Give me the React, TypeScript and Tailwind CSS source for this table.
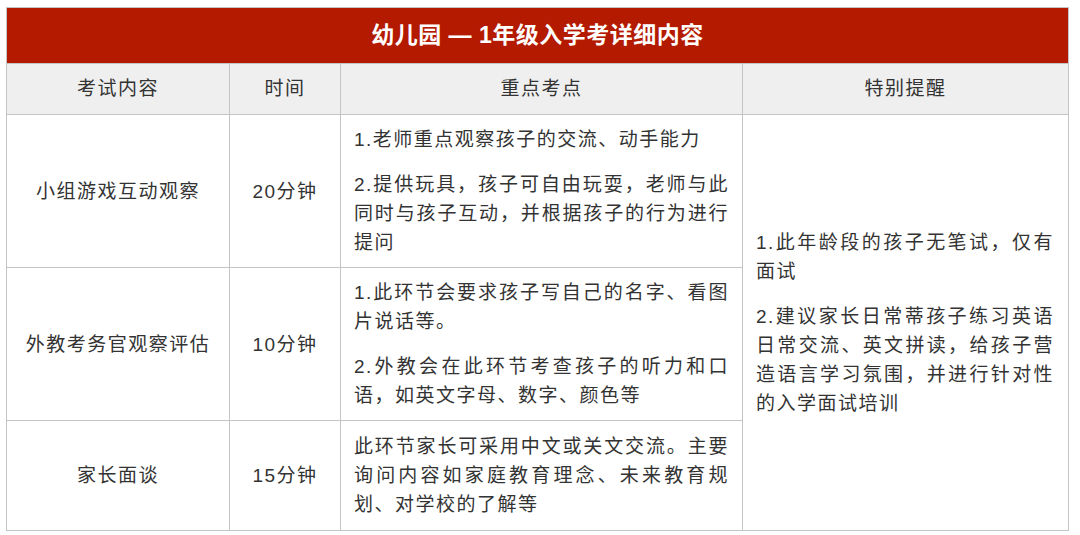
import React from 'react';

const rows = [
  {
    name: '小组游戏互动观察',
    time: '20分钟',
    points: ['1.老师重点观察孩子的交流、动手能力', '2.提供玩具，孩子可自由玩耍，老师与此同时与孩子互动，并根据孩子的行为进行提问'],
    h: 'h-[152px]',
  },
  {
    name: '外教考务官观察评估',
    time: '10分钟',
    points: ['1.此环节会要求孩子写自己的名字、看图片说话等。', '2.外教会在此环节考查孩子的听力和口语，如英文字母、数字、颜色等'],
    h: 'h-[152px]',
  },
  {
    name: '家长面谈',
    time: '15分钟',
    points: ['此环节家长可采用中文或关文交流。主要询问内容如家庭教育理念、未来教育规划、对学校的了解等'],
    h: 'h-[110px]',
  },
];

const tips = [
  '1.此年龄段的孩子无笔试，仅有面试',
  '2.建议家长日常蒂孩子练习英语日常交流、英文拼读，给孩子营造语言学习氛围，并进行针对性的入学面试培训',
];

const App = () => {
  return (
    <div className="w-[1080px] h-[535px] bg-white pt-[7px] pl-[6px] font-['Liberation_Sans','Noto_Sans_CJK_SC',sans-serif] text-[#333]">
      <table className="w-[1062px] border-collapse table-fixed">
        <colgroup>
          <col className="w-[223px]" />
          <col className="w-[111px]" />
          <col className="w-[402px]" />
          <col className="w-[326px]" />
        </colgroup>
        <thead>
          <tr className="h-[56px]">
            <th colSpan={4} className="bg-[#b41a00] border border-[#c4c4c4] text-white text-[23px] font-bold tracking-[0.5px]">
              幼儿园 — 1年级入学考详细内容
            </th>
          </tr>
          <tr className="h-[51px] bg-[#efefef] text-[19px] tracking-[1.5px]">
            <th className="border border-[#c4c4c4] font-normal">考试内容</th>
            <th className="border border-[#c4c4c4] font-normal">时间</th>
            <th className="border border-[#c4c4c4] font-normal">重点考点</th>
            <th className="border border-[#c4c4c4] font-normal">特别提醒</th>
          </tr>
        </thead>
        <tbody className="text-[19px] tracking-[1.5px] leading-[29px]">
          {rows.map((r, i) => (
            <tr key={r.name} className={r.h}>
              <td className="border border-[#c4c4c4] text-center">{r.name}</td>
              <td className="border border-[#c4c4c4] text-center">{r.time}</td>
              <td className="border border-[#c4c4c4] px-[13px] py-[10px] align-middle">
                <div className="flex flex-col gap-[16px] text-justify">
                  {r.points.map((p) => (
                    <p key={p}>{p}</p>
                  ))}
                </div>
              </td>
              {i === 0 && (
                <td rowSpan={3} className="border border-[#c4c4c4] pl-[13px] pr-[14px] align-middle">
                  <div className="flex flex-col gap-[16px] text-justify">
                    {tips.map((t) => (
                      <p key={t}>{t}</p>
                    ))}
                  </div>
                </td>
              )}
            </tr>
          ))}
        </tbody>
      </table>
    </div>
  );
};

export default App;
